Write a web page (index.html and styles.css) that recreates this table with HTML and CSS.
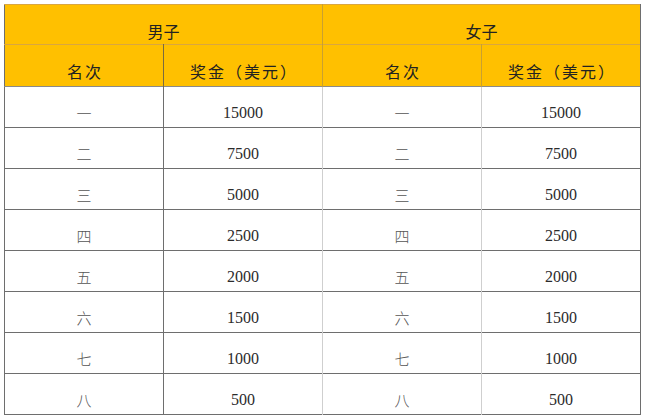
FILE: index.html
```html
<!DOCTYPE html>
<html lang="zh">
<head>
<meta charset="utf-8">
<link rel="stylesheet" href="styles.css">
</head>
<body>
<table class="prize">
  <colgroup>
    <col class="c1"><col class="c2"><col class="c3"><col class="c4">
  </colgroup>
  <thead>
    <tr class="h1">
      <th colspan="2" class="mid">男子</th>
      <th colspan="2" class="right">女子</th>
    </tr>
    <tr class="h2">
      <th class="dark">名次</th>
      <th class="mid">奖金（美元）</th>
      <th class="light">名次</th>
      <th class="right">奖金（美元）</th>
    </tr>
  </thead>
  <tbody>
    <tr><td class="dark">一</td><td class="mid">15000</td><td class="light">一</td><td class="right">15000</td></tr>
    <tr><td class="dark">二</td><td class="mid">7500</td><td class="light">二</td><td class="right">7500</td></tr>
    <tr><td class="dark">三</td><td class="mid">5000</td><td class="light">三</td><td class="right">5000</td></tr>
    <tr><td class="dark">四</td><td class="mid">2500</td><td class="light">四</td><td class="right">2500</td></tr>
    <tr><td class="dark">五</td><td class="mid">2000</td><td class="light">五</td><td class="right">2000</td></tr>
    <tr><td class="dark">六</td><td class="mid">1500</td><td class="light">六</td><td class="right">1500</td></tr>
    <tr><td class="dark">七</td><td class="mid">1000</td><td class="light">七</td><td class="right">1000</td></tr>
    <tr><td class="dark">八</td><td class="mid">500</td><td class="light">八</td><td class="right">500</td></tr>
  </tbody>
</table>
</body>
</html>
```
FILE: styles.css
```css
html, body {
  margin: 0;
  padding: 0;
  background: #ffffff;
}
body {
  padding: 4px 0 0 4px;
}
.prize {
  border-collapse: collapse;
  table-layout: fixed;
  width: 636px;
  font-family: "Liberation Serif", "Noto Sans CJK SC", serif;
  font-size: 16px;
  line-height: 20px;
  color: #2b2b2b;
  border-left: 1px solid #6e6e6e;
  border-bottom: 1px solid #6e6e6e;
}
.c1, .c2, .c3, .c4 { width: 159px; }
.prize th, .prize td {
  text-align: center;
  vertical-align: top;
  padding: 0;
  font-weight: normal;
  overflow: hidden;
}
.prize th {
  background: #ffc000;
  font-family: "Noto Sans CJK SC", serif;
  font-size: 16px;
  color: #222;
  border-top: 1px solid #d9a640;
}
.h1 th {
  height: 23px;
  padding-top: 16px;
}
.h2 th {
  height: 25px;
  padding-top: 16px;
  letter-spacing: 2px;
  text-indent: 2px;
}
.prize td {
  height: 24px;
  padding-top: 16px;
  border-top: 1px solid #6e6e6e;
}
.prize td.dark, .prize td.light {
  font-family: "Noto Sans CJK SC", serif;
  font-size: 15px;
  font-weight: 300;
  color: #555;
}
.prize th.dark { border-right: 1px solid #7a6a40; }
.prize th.mid { border-right: 1px solid #c9a030; }
.prize th.light { border-right: 1px solid #c9a030; }
.prize th.right { border-right: 1px solid #6e6e6e; }
.prize td.dark { border-right: 1px solid #6e6e6e; }
.prize td.mid { border-right: 1px solid #cfcfcf; }
.prize td.light { border-right: 1px solid #cfcfcf; }
.prize td.right { border-right: 1px solid #6e6e6e; }
.prize tbody tr:first-child td { border-top: 1px solid #8a8a8a; }
```
